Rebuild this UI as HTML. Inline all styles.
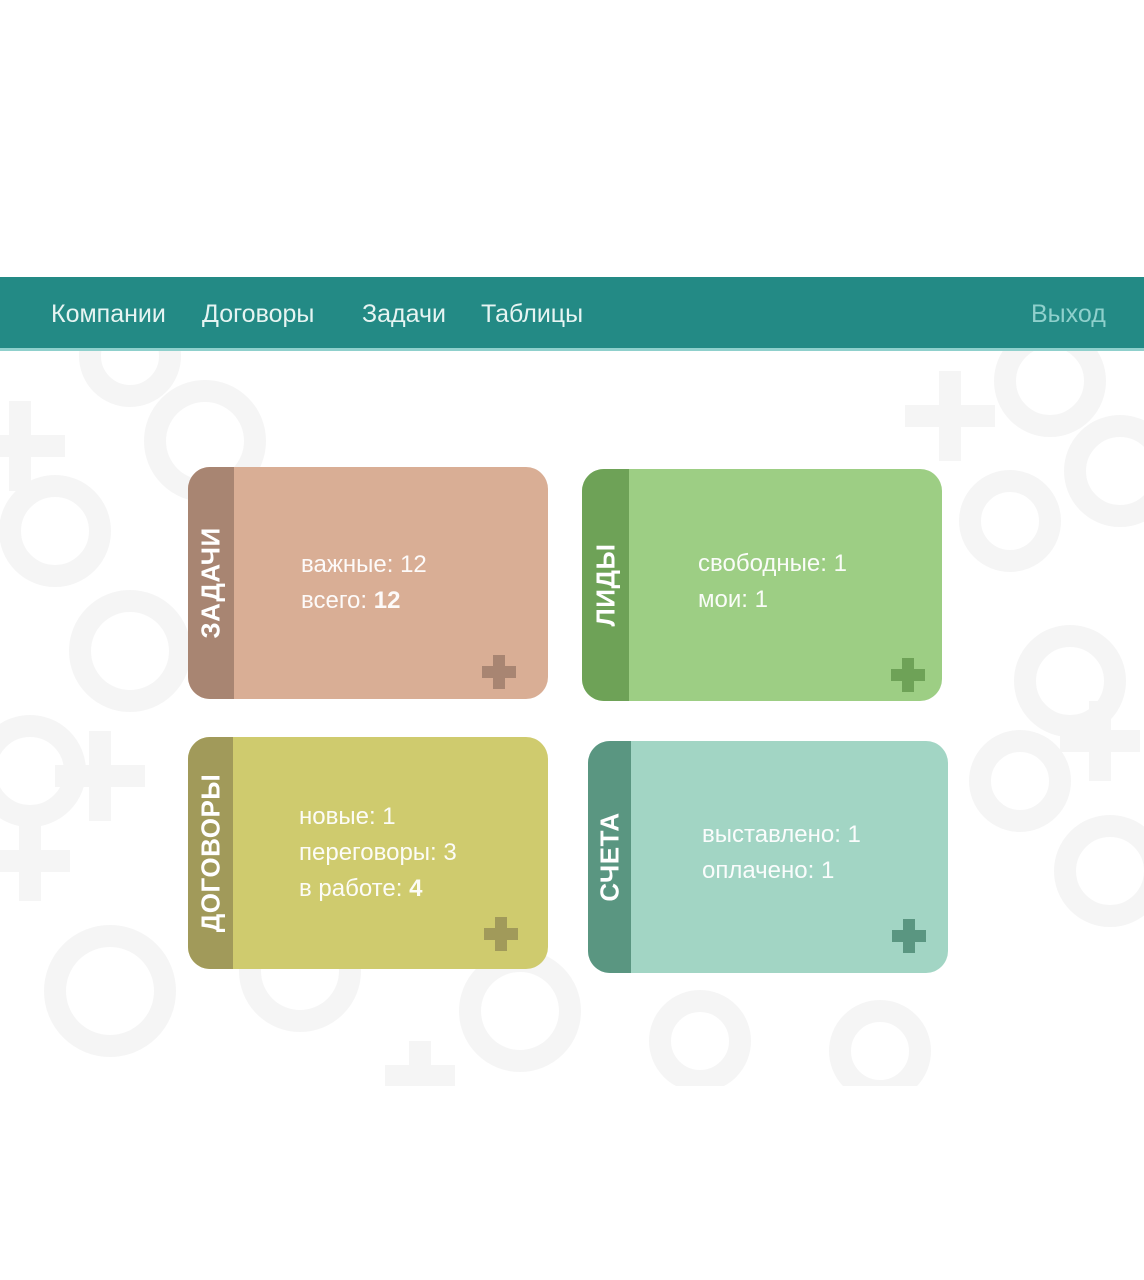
<!DOCTYPE html>
<html><head><meta charset="utf-8"><style>
body{margin:0;width:1144px;height:1280px;background:#fff;position:relative;overflow:hidden;font-family:"Liberation Sans","DejaVu Sans",sans-serif}
.nav{position:absolute;left:0;top:277px;width:1144px;height:71px;background:#238a85;border-bottom:3px solid #8fd0cc}
.nav span{position:absolute;top:23px;color:#e6f4f2;font-size:25px;font-weight:300}
.bg{position:absolute;left:0;top:351px}
.card{position:absolute;border-radius:22px;overflow:hidden;width:360px;height:232px}
.side{position:absolute;left:0;top:0;bottom:0;width:46px}
.side b{position:absolute;left:50%;top:50%;transform:translate(-50%,-50%) rotate(-90deg);color:#fff;font-size:26px;white-space:nowrap;letter-spacing:0.5px}
.txt{position:absolute;color:#fff;font-size:24px;line-height:36px;opacity:.95}
.plus{position:absolute;width:34px;height:34px}
</style></head><body>
<svg class="bg" width="1144" height="735" viewBox="0 0 1144 735">
<g fill="none" stroke="#f5f5f5" stroke-width="22">
<circle cx="130" cy="5" r="40"/><circle cx="55" cy="180" r="45"/><circle cx="130" cy="300" r="50"/><circle cx="205" cy="90" r="50"/>
<circle cx="30" cy="420" r="45"/><circle cx="110" cy="640" r="55"/><circle cx="300" cy="620" r="50"/><circle cx="520" cy="660" r="50"/>
<circle cx="1050" cy="30" r="45"/><circle cx="1120" cy="120" r="45"/><circle cx="1010" cy="170" r="40"/><circle cx="1070" cy="330" r="45"/>
<circle cx="1020" cy="430" r="40"/><circle cx="1110" cy="520" r="45"/><circle cx="700" cy="690" r="40"/><circle cx="880" cy="700" r="40"/>
</g>
<g stroke="#f5f5f5" stroke-width="22">
<path d="M20 50v90M-25 95h90"/><path d="M100 380v90M55 425h90"/><path d="M30 470v80M-10 510h80"/>
<path d="M950 20v90M905 65h90"/><path d="M1100 350v80M1060 390h80"/><path d="M420 690v70M385 725h70"/>
</g>
</svg>
<div class="nav">
<span style="left:51px">Компании</span>
<span style="left:202px">Договоры</span>
<span style="left:362px">Задачи</span>
<span style="left:481px">Таблицы</span>
<span style="left:1031px;color:#8fd0cc">Выход</span>
</div>

<div class="card" style="left:188px;top:467px;background:#d9ae95">
<div class="side" style="background:#a88572"><b>ЗАДАЧИ</b></div>
<div class="txt" style="left:113px;top:80px">важные: 12<br>всего: <b>12</b></div>
<svg class="plus" style="left:294px;top:188px" viewBox="0 0 34 34"><path d="M11 0h12v11h11v12H23v11H11V23H0V11h11z" fill="#a88572"/></svg>
</div>

<div class="card" style="left:582px;top:469px;background:#9dce84">
<div class="side" style="background:#6ea257;width:47px"><b>ЛИДЫ</b></div>
<div class="txt" style="left:116px;top:77px">свободные: 1<br>мои: 1</div>
<svg class="plus" style="left:309px;top:189px" viewBox="0 0 34 34"><path d="M11 0h12v11h11v12H23v11H11V23H0V11h11z" fill="#6ea257"/></svg>
</div>

<div class="card" style="left:188px;top:737px;background:#cfcb6e">
<div class="side" style="background:#a19a5a;width:45px"><b>ДОГОВОРЫ</b></div>
<div class="txt" style="left:111px;top:62px">новые: 1<br>переговоры: 3<br>в работе: <b>4</b></div>
<svg class="plus" style="left:296px;top:180px" viewBox="0 0 34 34"><path d="M11 0h12v11h11v12H23v11H11V23H0V11h11z" fill="#a19a5a"/></svg>
</div>

<div class="card" style="left:588px;top:741px;background:#a2d5c4">
<div class="side" style="background:#5a9681;width:43px"><b>СЧЕТА</b></div>
<div class="txt" style="left:114px;top:76px">выставлено: 1<br>оплачено: 1</div>
<svg class="plus" style="left:304px;top:178px" viewBox="0 0 34 34"><path d="M11 0h12v11h11v12H23v11H11V23H0V11h11z" fill="#5a9681"/></svg>
</div>
</body></html>
